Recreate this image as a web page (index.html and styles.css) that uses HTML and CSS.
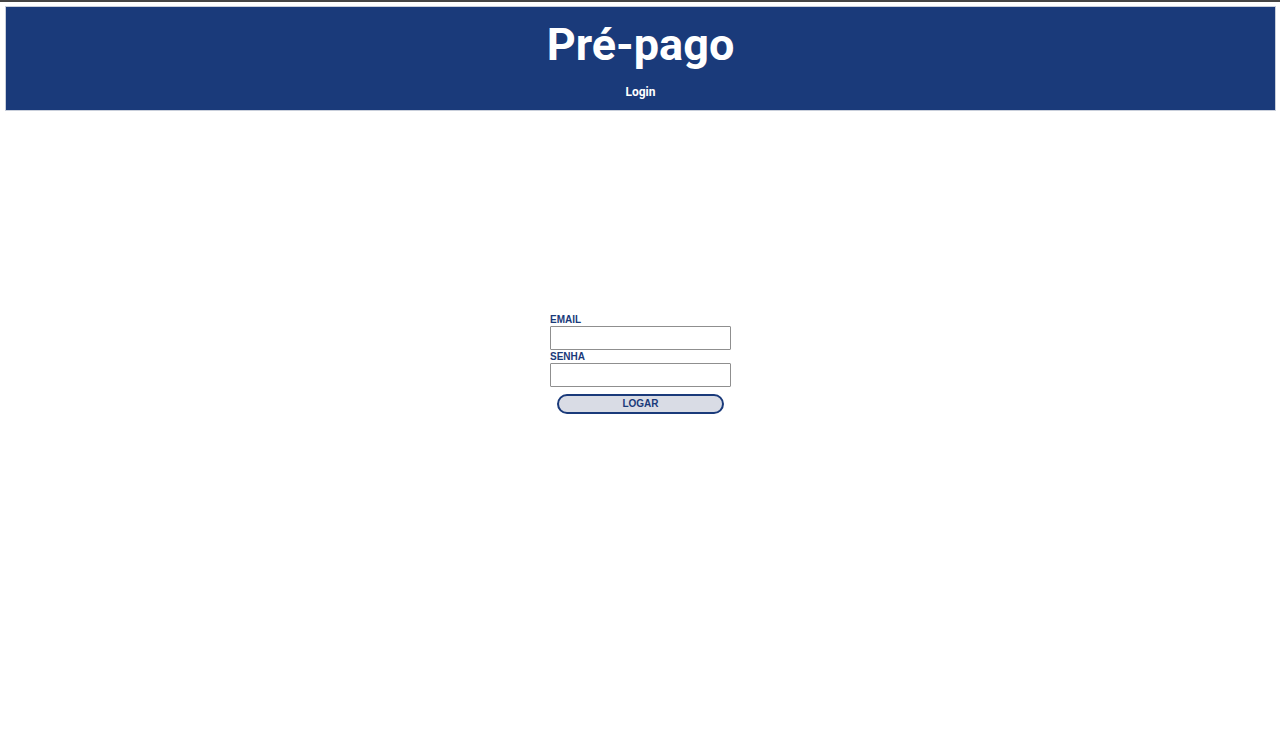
FILE: index.html
```html
<!DOCTYPE html>
<html lang="pt-BR">
<head>
<meta charset="utf-8">
<title>Pré-pago</title>
<link rel="stylesheet" href="styles.css">
</head>
<body>
<div class="topline"></div>
<header class="header">
  <h1 class="title">Pré-pago</h1>
  <nav class="nav"><span class="nav-item">Login</span></nav>
</header>
<main class="main">
  <form class="login">
    <label class="label" for="email">EMAIL</label>
    <input class="input" id="email" type="text">
    <label class="label" for="senha">SENHA</label>
    <input class="input" id="senha" type="password">
    <button class="btn" type="button">LOGAR</button>
  </form>
</main>
</body>
</html>
```
FILE: styles.css
```css
html, body {
  margin: 0;
  padding: 0;
  background: #fff;
}
.topline {
  height: 2px;
  background: #454545;
}
.header {
  margin: 4px 4px 0 5px;
  height: 103px;
  background: #1a3a7a;
  border: 1px solid #c9cfdb;
  display: flex;
  flex-direction: column;
  align-items: center;
  color: #fff;
  font-family: Roboto, "Liberation Sans", sans-serif;
}
.title {
  margin: 13px 0 0 0;
  font-size: 45px;
  font-weight: 700;
  line-height: 50px;
}
.nav {
  margin-top: 15px;
  font-size: 12px;
  font-weight: 700;
  line-height: 14px;
}
.main {
  display: flex;
  justify-content: center;
  padding-top: 202px;
}
.login {
  width: 181px;
  display: flex;
  flex-direction: column;
  margin-left: 1px;
  font-family: "Liberation Sans", Arial, sans-serif;
}
.label {
  color: #1a3a7a;
  font-size: 10px;
  font-weight: 700;
  line-height: 13px;
}
.input {
  box-sizing: border-box;
  width: 181px;
  height: 24px;
  margin: 0;
  padding: 0 4px;
  border: 1px solid #8f8f8f;
  border-radius: 1px;
  background: #fff;
}
.btn {
  box-sizing: border-box;
  align-self: center;
  width: 167px;
  height: 20px;
  margin-top: 7px;
  padding: 0;
  border: 2px solid #1a3a7a;
  border-radius: 10px;
  background: #d9dce5;
  color: #1a3a7a;
  font-family: "Liberation Sans", Arial, sans-serif;
  font-size: 10px;
  font-weight: 700;
  line-height: 14px;
}
```
